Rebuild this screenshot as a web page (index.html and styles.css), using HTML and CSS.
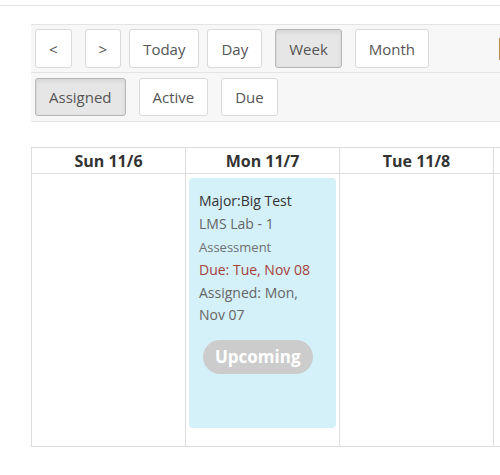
FILE: index.html
```html
<!DOCTYPE html>
<html lang="en">
<head>
  <meta charset="UTF-8" />
  <meta name="viewport" content="width=device-width, initial-scale=1.0"/>
  <title>Calendar</title>
  <link rel="stylesheet" href="styles.css">
</head>
<body>
  <div class="topbar"></div>

  <div class="toolbar">
    <div class="tool-row">
      <button class="btn">&lt;</button>
      <button class="btn">&gt;</button>
      <button class="btn btn-tight">Today</button>
      <button class="btn btn-tight">Day</button>
      <button class="btn active">Week</button>
      <button class="btn">Month</button>
      <div class="picker"></div>
    </div>
    <div class="tool-row">
      <button class="btn active">Assigned</button>
      <button class="btn">Active</button>
      <button class="btn">Due</button>
    </div>
  </div>

  <table class="calendar">
    <thead>
      <tr>
        <th>Sun 11/6</th>
        <th>Mon 11/7</th>
        <th>Tue 11/8</th>
        <th></th>
      </tr>
    </thead>
    <tbody>
      <tr>
        <td></td>
        <td>
          <div class="event">
            <div class="event-title">Major:Big Test</div>
            <div class="event-name">LMS Lab - 1</div>
            <div class="event-type">Assessment</div>
            <div class="event-due">Due: Tue, Nov 08</div>
            <div class="event-name">Assigned: Mon, Nov 07</div>
            <span class="badge">Upcoming</span>
          </div>
        </td>
        <td></td>
        <td></td>
      </tr>
    </tbody>
  </table>
</body>
</html>
```

FILE: styles.css
```css
body {
  font-family: 'Open Sans', 'Liberation Sans', sans-serif;
  background: #ffffff;
  margin: 0;
  overflow: hidden;
  color: #333;
}
.topbar {
  height: 5px;
  border-bottom: 1px solid #e6e6e6;
}
.toolbar {
  margin: 18px 0 0 31px;
  width: 600px;
  background: #f7f7f7;
  border-top: 1px solid #e4e4e4;
  border-bottom: 1px solid #e4e4e4;
}
.tool-row {
  display: flex;
  align-items: center;
  gap: 13px;
  padding: 4px;
  height: 39px;
}
.tool-row + .tool-row {
  border-top: 1px solid #e4e4e4;
  padding: 5px 4px;
  height: 38px;
}
.btn {
  height: 100%;
  padding: 0 13px;
  background: #ffffff;
  border: 1px solid #d9d9d9;
  border-radius: 3px;
  font-family: 'Open Sans', 'Liberation Sans', sans-serif;
  font-size: 15px;
  color: #555;
  cursor: pointer;
}
.btn-tight {
  margin-left: -5px;
}
.btn.active {
  background: #e6e6e6;
  border-color: #b5b5b5;
  box-shadow: inset 0 2px 4px rgba(0, 0, 0, 0.08);
}
.picker {
  margin-left: 57px;
  width: 40px;
  height: 22px;
  border-left: 3px solid #c08a4a;
}
.calendar {
  margin: 25px 0 0 31px;
  width: 617px;
  border-collapse: collapse;
  table-layout: fixed;
}
.calendar th,
.calendar td {
  border: 1px solid #dddddd;
  width: 153px;
  padding: 0;
}
.calendar th {
  height: 25px;
  font-size: 16px;
  font-weight: bold;
  color: #333;
  text-align: center;
}
.calendar td {
  height: 272px;
  vertical-align: top;
}
.event {
  margin: 4px 3px 0 3px;
  height: 250px;
  box-sizing: border-box;
  background: #d4f0f9;
  border-radius: 4px;
  padding: 12px 13px 12px 10px;
  font-size: 14px;
  line-height: 22.5px;
}
.event-title {
  color: #333;
}
.event-name {
  color: #666;
}
.event-type {
  font-size: 13px;
  line-height: 24px;
  color: #707070;
}
.event-due {
  color: #a4403e;
}
.badge {
  display: inline-block;
  margin: 13px 0 0 4px;
  padding: 0 12px;
  height: 34px;
  line-height: 34px;
  border-radius: 17px;
  background: #cccccc;
  color: #ffffff;
  font-size: 17px;
  font-weight: bold;
}
```
